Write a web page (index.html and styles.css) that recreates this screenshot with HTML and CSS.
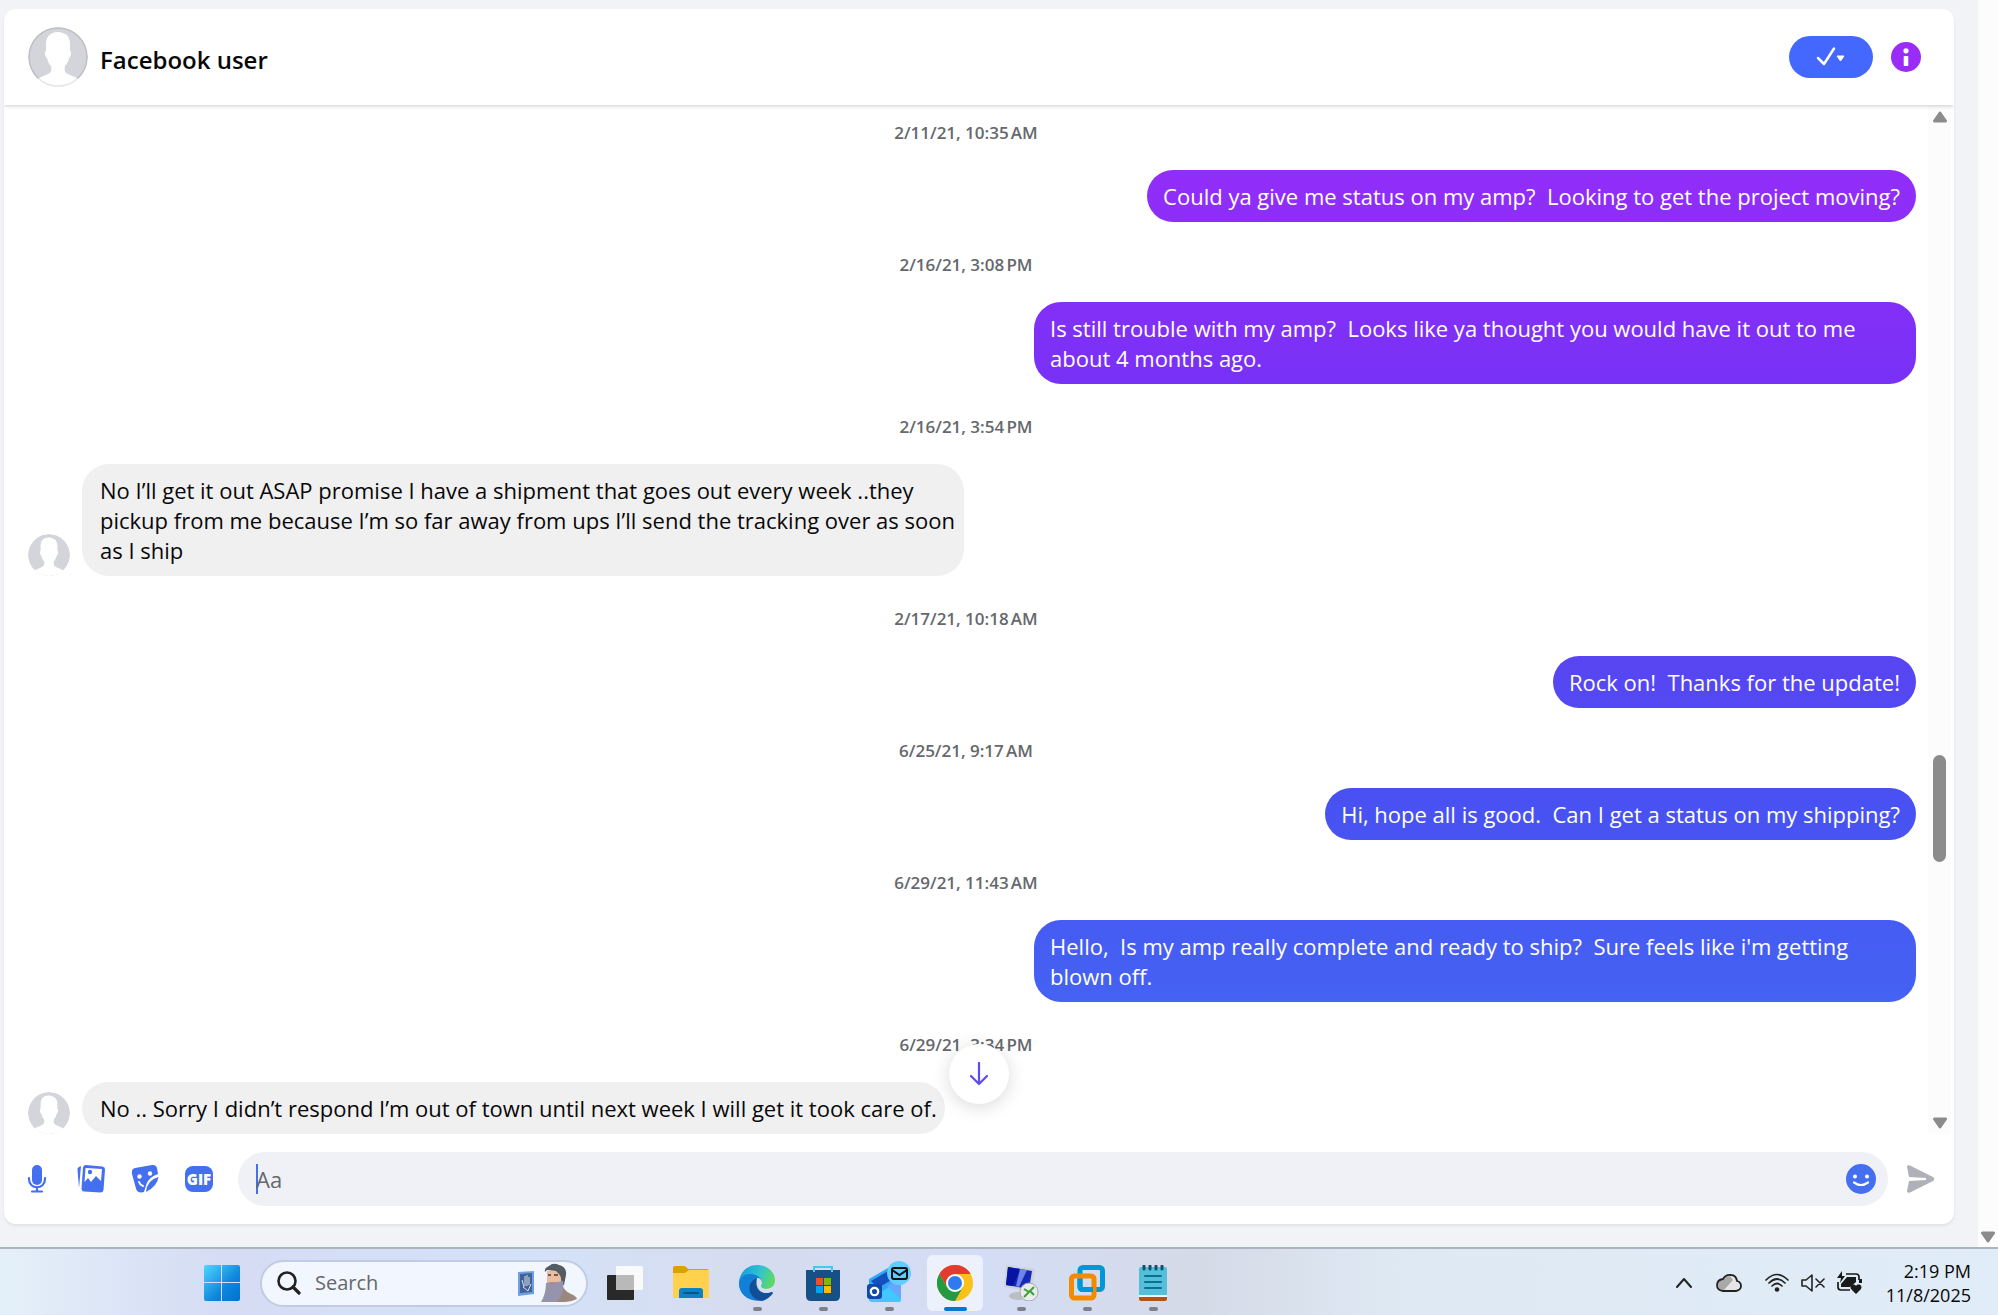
FILE: index.html
```html
<!DOCTYPE html>
<html lang="en">
<head>
    <meta charset="UTF-8">
    <meta name="viewport" content="width=device-width, initial-scale=1.0">
    <title>Facebook user</title>
    <link rel="stylesheet" href="styles.css">
</head>
<body>
    <!-- shared shapes -->
    <svg class="defs" aria-hidden="true">
        <symbol id="person" viewBox="0 0 60 60">
            <path d="M30 5c-8 0-12 5-12 12v7c-2 0-1 6 1 7 1 4 2 6 4 8 1 4 0 7-3 8L9 52c6 5 13 8 21 8s15-3 21-8l-11-5c-3-1-4-4-3-8 2-2 3-4 4-8 2-1 3-7 1-7v-7c0-5-2-9-5-10-2-1-4-2-7-2z" fill="#fff"/>
        </symbol>
    </svg>

    <div class="page">
        <main class="chat">
            <header class="chat-header">
                <svg class="avatar large" viewBox="0 0 60 60"><circle cx="30" cy="30" r="30" fill="#d4d5db"/><use href="#person"/><circle cx="30" cy="30" r="29" fill="none" stroke="#000" stroke-opacity=".1" stroke-width="1.5"/></svg>
                <h1>Facebook user</h1>
                <button class="done" aria-label="Mark as done">
                    <svg width="30" height="22" viewBox="0 0 30 22"><path d="M2 12l6 6L18 2.500" fill="none" stroke="#fff" stroke-width="2.500" stroke-linecap="round" stroke-linejoin="round"/><path d="M21 10h7l-3.500 5z" fill="#fff" stroke="#fff" stroke-linejoin="round"/></svg>
                </button>
                <button class="info" aria-label="Conversation information">
                    <svg width="30" height="30" viewBox="0 0 30 30"><circle cx="15" cy="15" r="15" fill="#9b2cf8"/><circle cx="15" cy="8.800" r="2.600" fill="#fff"/><rect x="12.700" y="14" width="4.600" height="10" rx=".8" fill="#fff"/></svg>
                </button>
            </header>

            <div class="chat-body">
                <div class="messages">
                    <div class="time">2/11/21, 10:35&#8239;AM</div>
                    <div class="row sent"><div class="bubble">Could ya give me status on my amp?  Looking to get the project moving?</div></div>

                    <div class="time">2/16/21, 3:08&#8239;PM</div>
                    <div class="row sent"><div class="bubble">Is still trouble with my amp?  Looks like ya thought you would have it out to me about 4 months ago.</div></div>

                    <div class="time">2/16/21, 3:54&#8239;PM</div>
                    <div class="row">
                        <svg class="avatar" viewBox="0 0 60 60"><circle cx="30" cy="30" r="30" fill="#d4d5db"/><use href="#person"/></svg>
                        <div class="bubble">No I’ll get it out ASAP promise I have a shipment that goes out every week ..they pickup from me because I’m so far away from ups I’ll send the tracking over as soon as I ship</div>
                    </div>

                    <div class="time">2/17/21, 10:18&#8239;AM</div>
                    <div class="row sent"><div class="bubble">Rock on!  Thanks for the update!</div></div>

                    <div class="time">6/25/21, 9:17&#8239;AM</div>
                    <div class="row sent"><div class="bubble">Hi, hope all is good.  Can I get a status on my shipping?</div></div>

                    <div class="time">6/29/21, 11:43&#8239;AM</div>
                    <div class="row sent"><div class="bubble">Hello,  Is my amp really complete and ready to ship?  Sure feels like i'm getting blown off.</div></div>

                    <div class="time">6/29/21, 3:34&#8239;PM</div>
                    <div class="row">
                        <svg class="avatar" viewBox="0 0 60 60"><circle cx="30" cy="30" r="30" fill="#d4d5db"/><use href="#person"/></svg>
                        <div class="bubble">No .. Sorry I didn’t respond I’m out of town until next week I will get it took care of.</div>
                    </div>
                </div>
                <div class="scrollbar">
                    <svg width="16" height="12" viewBox="0 0 16 12"><path d="M8 2l5.500 8h-11z" fill="#8b8b8b" stroke="#8b8b8b" stroke-width="3" stroke-linejoin="round"/></svg>
                    <div class="thumb"></div>
                    <svg width="16" height="12" viewBox="0 0 16 12"><path d="M8 10l5.500-8h-11z" fill="#8b8b8b" stroke="#8b8b8b" stroke-width="3" stroke-linejoin="round"/></svg>
                </div>
                <button class="jump" aria-label="Scroll to bottom">
                    <svg width="20" height="24" viewBox="0 0 20 24"><path d="M10 1v21M2 14l8 8 8-8" fill="none" stroke="#5a4cf0" stroke-width="2.200" stroke-linecap="round" stroke-linejoin="round"/></svg>
                </button>
            </div>

            <form class="composer">
                <div class="tools">
                    <button type="button" aria-label="Voice clip">
                        <svg width="30" height="30" viewBox="0 0 30 30"><rect x="10" y="1" width="10" height="20" rx="5" fill="#4470f0"/><path d="M7 14v1c0 11 16 11 16 0v-1M15 23v4M10 27.500h10" fill="none" stroke="#4470f0" stroke-width="2.200" stroke-linecap="round"/></svg>
                    </button>
                    <button type="button" aria-label="Attach a photo">
                        <svg width="30" height="30" viewBox="0 0 30 30"><path d="M5 2L3 3q-2 1-1.500 3L3 24z" fill="#4470f0"/><path d="M9.500 1l17 1.500q2.500.5 2.500 3L27.500 26q-.5 2.500-3 2.500L8 27.500q-2.500-.5-2.500-3L7 3.500Q7.500 1 9.500 1z" fill="#4470f0"/><path d="M9.500 4l16.500 1-1 12-5-5-5 6-3-4-3.500 4z" fill="#fff"/><circle cx="14" cy="8" r="2.200" fill="#4470f0"/></svg>
                    </button>
                    <button type="button" aria-label="Choose a sticker">
                        <svg width="30" height="30" viewBox="0 0 30 30"><path d="M5 4l17-3q4-.5 5 3l1 6q-9 3-11.500 10l-2.500 8-3 .5q-4 0-5-4L2 10q-1-5 3-6z" fill="#4470f0"/><path d="M28.500 13q-1 9-12.500 15 1-12 12.500-15z" fill="#4470f0"/><circle cx="9.500" cy="12.500" r="2.200" fill="#fff"/><circle cx="20" cy="9.500" r="2.200" fill="#fff"/><path d="M9 18q1 3 4 4" fill="none" stroke="#fff" stroke-width="2" stroke-linecap="round"/></svg>
                    </button>
                    <button type="button" aria-label="Choose a GIF">
                        <svg width="30" height="30" viewBox="0 0 30 30"><rect x="1" y="2" width="28" height="26" rx="8" fill="#4470f0"/><text x="15" y="21" class="gif" text-anchor="middle">GIF</text></svg>
                    </button>
                </div>
                <div class="field">
                    <input type="text" aria-label="Message" placeholder="Aa">
                    <button type="button" aria-label="Choose an emoji">
                        <svg width="30" height="30" viewBox="0 0 30 30"><circle cx="15" cy="15" r="15" fill="#4470f0"/><circle cx="9" cy="12.500" r="2" fill="#fff"/><circle cx="21" cy="12.500" r="2" fill="#fff"/><path d="M8 18.500q7 5 14 0" fill="none" stroke="#fff" stroke-width="2.200" stroke-linecap="round"/></svg>
                    </button>
                </div>
                <button type="submit" aria-label="Send">
                    <svg width="30" height="30" viewBox="0 0 30 30"><path d="M1 3q0-2.500 3-1.500L27 13q2.500 2 0 4L4 28.500Q1 29.500 1 27l2-10 17-1v-2L3 13z" fill="#b0b1b8"/></svg>
                </button>
            </form>
        </main>
        <div class="page-scroll">
            <svg width="16" height="12" viewBox="0 0 16 12"><path d="M8 10l5.500-8h-11z" fill="#8b8b8b" stroke="#8b8b8b" stroke-width="3" stroke-linejoin="round"/></svg>
        </div>
    </div>

    <footer class="taskbar">
        <button class="start" aria-label="Start">
            <svg width="36" height="36" viewBox="0 0 36 36"><defs><linearGradient id="win" x1="0" y1="0" x2="1" y2="1"><stop offset="0" stop-color="#4fd5ff"/><stop offset=".6" stop-color="#0f86dc"/><stop offset="1" stop-color="#0072d0"/></linearGradient></defs><path d="M2 0h15v17H0V2q0-2 2-2zM18 0h16q2 0 2 2v15H18zM0 18h17v18H2q-2 0-2-2zM18 18h18v16q0 2-2 2H18z" fill="url(#win)"/></svg>
        </button>
        <label class="search">
            <svg width="24" height="24" viewBox="0 0 24 24"><circle cx="10" cy="10" r="8.500" fill="none" stroke="#222" stroke-width="2.600"/><path d="M16 16l6 6" stroke="#222" stroke-width="3.200" stroke-linecap="round"/></svg>
            <input type="text" placeholder="Search" aria-label="Search">
            <svg width="60" height="40" viewBox="0 0 60 40">
                <path d="M1 9l16-1v23L1 33z" fill="#6c9fe6"/><path d="M3 11l12-1v19L3 30z" fill="#446191"/><path d="M7 24l-2-7M8 23V13M10 23V12M12 22V14M6 24l5 4 3-7" fill="none" stroke="#d4e0f3"/>
                <path d="M36 39l6-14 4-1q3 5 8 7 5 2 6 5-6 3-12 3z" fill="#9a877d"/>
                <path d="M30 8h13l4 6-1 11-6 5h-6l-4-10z" fill="#ebbd9f"/>
                <path d="M28 9q-1-4 4-6 4-4 10-1 8 2 7 10l-2 10-3-1q1-7-2-10l-3-3-9-1z" fill="#535b63"/>
                <path d="M29 20l5-1h6l6-1q1 8-1 13-2 5-6 8H24q5-8 5-19z" fill="#9694ad"/>
                <path d="M31 12h3M37 12h4" stroke="#4a3835" stroke-width="1.500"/><path d="M33 21h5" stroke="#c77a6a"/>
            </svg>
        </label>
        <div class="apps">
            <button class="app" aria-label="Task view">
                <svg width="36" height="36" viewBox="0 0 36 36"><rect x="0" y="10" width="27" height="25" rx="1" fill="#292929"/><rect x="9" y="1" width="27" height="24" rx="1" fill="#fafafa"/><path d="M9 10h18v15H9z" fill="#b9b9b9"/></svg>
            </button>
            <button class="app" aria-label="File Explorer">
                <svg width="36" height="36" viewBox="0 0 36 36"><path d="M0 3q0-2 2-2h9q2 0 4 3h19q2 0 2 2v10H0z" fill="#dda000"/><path d="M0 8h12l4-3h20v28H0z" fill="#ffd14c"/><path d="M6 33v-7q0-3 3-3h18q3 0 3 3v7z" fill="#0b82c8"/><path d="M11 28h14" stroke="#075384" stroke-width="2" stroke-linecap="round"/></svg>
            </button>
            <button class="app running" aria-label="Microsoft Edge">
                <svg width="36" height="36" viewBox="0 0 36 36"><defs><linearGradient id="edge" x1="0" y1=".2" x2="1" y2=".6"><stop offset="0" stop-color="#1699df"/><stop offset=".5" stop-color="#32c3ce"/><stop offset="1" stop-color="#66df4c"/></linearGradient></defs>
                    <path d="M0 18C0 8 8 0 18 0s18 7 18 15c0 6-4 9-9 9-4 0-6-1-5-4l-4 13C6 34 0 28 0 18z" fill="url(#edge)"/>
                    <path d="M0 18C1 12 6 9 11 9c7 0 12 4 12 9-3-5-9-2-9 5s5 10 9 12C11 38 0 30 0 18z" fill="#1280d6"/>
                    <path d="M18 13c-6 2-9 8-7 14 2 5 7 9 12 9 5-1 9-5 11-8 0-1-1-1-2-1-5 2-10 1-13-3-2-3-2-8 1-10z" fill="#124f99"/>
                    <path d="M18 13c3 0 5 2 5 5 0 1-1 2-1 3 0 2 2 3 5 3 3 0 5-1 7-2v4q-7 4-12 0-6-4-4-13z" fill="#d8def0"/>
                </svg>
            </button>
            <button class="app running" aria-label="Microsoft Store">
                <svg width="36" height="36" viewBox="0 0 36 36"><path d="M1 5h34v26q0 5-5 5H6q-5 0-5-5z" fill="#174f87"/><path d="M9 7V2h18v5" fill="none" stroke="#46c8f4" stroke-width="2"/><path d="M11 13h7v7h-7z" fill="#f25022"/><path d="M19 13h7v7h-7z" fill="#7fba00"/><path d="M11 21h7v7h-7z" fill="#00a4ef"/><path d="M19 21h7v7h-7z" fill="#ffb900"/></svg>
            </button>
            <button class="app running" aria-label="Outlook">
                <svg width="44" height="44" viewBox="0 0 44 44"><path d="M2 18l19-11 13 6v25q0 3-3 3H6q-4 0-4-4z" fill="#2fa9f4"/><path d="M4 20l17-10 10 5-20 12z" fill="#1550bf"/><path d="M2 38l32-19v19q0 3-3 3H6q-4 0-4-3z" fill="#40c8ff"/><path d="M20 25l14-9v22z" fill="#68a5fc"/><rect x="0" y="23" width="15" height="15" rx="3" fill="#1149a7"/><circle cx="7.500" cy="30.500" r="3.700" fill="none" stroke="#fff" stroke-width="2.300"/><circle cx="32" cy="12" r="12" fill="#60cdff"/><rect x="25" y="7" width="15" height="11" rx="2" fill="none" stroke="#111" stroke-width="2"/><path d="M25 9l7.500 5L40 9" fill="none" stroke="#111" stroke-width="2"/></svg>
            </button>
            <button class="app running active" aria-label="Google Chrome">
                <svg width="36" height="36" viewBox="0 0 36 36"><circle cx="18" cy="18" r="18" fill="#fbc116"/><path d="M2.400 9A18 18 0 0 1 33.600 9H18l-7.800 13.500z" fill="#e33b2e"/><path d="M2.400 9A18 18 0 0 0 18 36l7.800-13.500H10.200z" fill="#249a41"/><circle cx="18" cy="18" r="9" fill="#fff"/><circle cx="18" cy="18" r="7" fill="#3079ee"/></svg>
            </button>
            <button class="app running" aria-label="Remote Desktop">
                <svg width="36" height="36" viewBox="0 0 36 36"><ellipse cx="15" cy="31" rx="9" ry="4" fill="#bbbec3"/><path d="M3 0l29 4-3 23L1 22z" fill="#ced1d8"/><path d="M5 2l24 4-3 18L3 20z" fill="#1429b7"/><path d="M5 2l12 2-7 17-7-1z" fill="#0713a3"/><path d="M17 4l7 1-8 17-3-1z" fill="#6e84e8"/><circle cx="26" cy="27" r="9" fill="#e9ebed" stroke="#a7aaad"/><path d="M21 24l5 3-5 5M31 22l-4 4 4 4" fill="none" stroke="#38a332" stroke-width="2"/></svg>
            </button>
            <button class="app running" aria-label="VMware">
                <svg width="36" height="36" viewBox="0 0 36 36"><rect x="11" y="2.500" width="22.500" height="22" rx="3" fill="none" stroke="#0097d8" stroke-width="5"/><rect x="2.500" y="11" width="22.500" height="22" rx="3" fill="none" stroke="#f38b00" stroke-width="5"/><path d="M11 14v7.500q0 3 3 3h10" fill="none" stroke="#0097d8" stroke-width="5"/></svg>
            </button>
            <button class="app running" aria-label="Notepad">
                <svg width="36" height="36" viewBox="0 0 36 36"><path d="M4 31h28v3q0 2-2 2H6q-2 0-2-2z" fill="#b5530d"/><path d="M4 29h28v3H4z" fill="#f4f4f4"/><path d="M6 2h24q2 0 2 2v26H4V4q0-2 2-2z" fill="#55bfda"/><path d="M9 1v3M15 1v3M21 1v3M27 1v3" stroke="#11526b" stroke-width="3" stroke-linecap="round"/><path d="M10 11h16M10 17h16M10 23h16" stroke="#087092" stroke-width="2" stroke-linecap="round"/></svg>
            </button>
        </div>
        <div class="tray">
            <button aria-label="Show hidden icons"><svg width="18" height="12" viewBox="0 0 18 12"><path d="M2 10l7-8 7 8" fill="none" stroke="#222" stroke-width="2" stroke-linecap="round" stroke-linejoin="round"/></svg></button>
            <button aria-label="OneDrive"><svg width="26" height="20" viewBox="0 0 26 20"><path d="M7 18q-6-1-6-6t6-6q3-5 8-4 5 0 6 6 4 1 4 5t-5 5z" fill="#e6e6e6"/><path d="M7 17q-5-1-5-5t5-5q2-4 7-4l3 4-9 10z" fill="#a9a9a9"/><path d="M7 18q-6-1-6-6t6-6q3-5 8-4 5 0 6 6 4 1 4 5t-5 5z" fill="none" stroke="#222" stroke-width="1.800"/></svg></button>
            <button class="network" aria-label="Network, sound and battery">
                <svg width="24" height="20" viewBox="0 0 24 20"><path d="M1 7q11-11 22 0M4 10q8-8 16 0M7 13q5-5 10 0" fill="none" stroke="#222" stroke-width="1.700" stroke-linecap="round"/><circle cx="12" cy="16.500" r="2.300" fill="#222"/></svg>
                <svg width="24" height="20" viewBox="0 0 24 20"><path d="M1 7h4l6-5v16l-6-5H1zM15 6l8 8M23 6l-8 8" fill="none" stroke="#222" stroke-width="1.600" stroke-linecap="round" stroke-linejoin="round"/></svg>
                <svg width="26" height="24" viewBox="0 0 26 24"><path d="M9 3h10q3 0 3 3v3M1 11v5q0 3 3 3h9" fill="none" stroke="#1a1a1a" stroke-width="1.700"/><path d="M10 6h9v5l-6 5H4v-3zM22 8h3v4h-3z" fill="#1a1a1a"/><path d="M5 0L0 7h4l-1 5 5-7H5z" fill="#1a1a1a"/><path d="M19 23l-5-5c-2-4 3-6 5-3 2-3 7-1 5 3z" fill="#1a1a1a"/></svg>
            </button>
            <div class="clock"><span>2:19 PM</span><span>11/8/2025</span></div>
        </div>
    </footer>
</body>
</html>
```
FILE: styles.css
```css
* {
    box-sizing: border-box;
}

body {
    margin: 0;
    height: 100vh;
    display: flex;
    flex-direction: column;
    background: #f2f3f7;
    font-family: "Open Sans", "Noto Sans", sans-serif;
    font-size: 22px;
    line-height: 30px;
    color: #080809;
}

button {
    display: flex;
    align-items: center;
    justify-content: center;
    padding: 0;
    border: 0;
    background: none;
}

svg {
    display: block;
    flex: none;
}

.defs {
    position: absolute;
    width: 0;
    height: 0;
}

.page {
    flex: 1;
    min-height: 0;
    display: flex;
}

.chat {
    flex: 1;
    min-width: 0;
    display: flex;
    flex-direction: column;
    margin: 9px 24px 23px 4px;
    background: #fff;
    border-radius: 12px;
    box-shadow: 0 2px 3px rgba(0, 0, 0, 0.07);
}

.page-scroll {
    width: 20px;
    padding: 0 2px 4px;
    display: flex;
    align-items: flex-end;
    background: #fcfcfc;
}

/* header */
.chat-header {
    height: 96px;
    padding: 0 33px 0 24px;
    display: flex;
    align-items: center;
    box-shadow: 0 1px 4px rgba(0, 0, 0, 0.2);
    clip-path: inset(0 0 -8px 0);
    z-index: 1;
}

.avatar {
    width: 42px;
    height: 42px;
    margin-right: 12px;
    border-radius: 50%;
}

.avatar.large {
    width: 60px;
    height: 60px;
}

h1 {
    flex: 1;
    margin: 6px 0 0;
    font-size: 24px;
    font-weight: 600;
}

.done {
    width: 84px;
    height: 42px;
    margin-right: 18px;
    border-radius: 21px;
    background: #4468fd;
}

/* conversation */
.chat-body {
    position: relative;
    flex: 1;
    min-height: 0;
    display: flex;
    padding-right: 3px;
}

.messages {
    flex: 1;
    display: flex;
    flex-direction: column;
    justify-content: flex-end;
    overflow: hidden;
}

.time {
    flex: none;
    padding: 33px 0 27px;
    font-size: 17px;
    line-height: 20px;
    font-weight: 600;
    text-align: center;
    color: #65686c;
}

.row {
    flex: none;
    display: flex;
    align-items: flex-end;
    padding: 0 12px 0 24px;
}

.sent {
    justify-content: flex-end;
}

.bubble {
    max-width: 882px;
    padding: 11px 8px 11px 18px;
    border-radius: 27px;
    background: #f0f0f0;
    white-space: pre-wrap;
}

/* one gradient runs behind all the sent bubbles */
.sent .bubble {
    padding: 11px 16px;
    color: #fff;
    background: linear-gradient(#9b2cfa 105px, #7831f6 385px, #5547f2 683px, #4852f2 815px, #4464f3 1020px) fixed;
}

.scrollbar {
    width: 23px;
    display: flex;
    flex-direction: column;
    align-items: center;
    justify-content: space-between;
    padding: 6px 0 5px;
    background: #fcfcfc;
}

.thumb {
    width: 13px;
    height: 107px;
    margin-top: 376px;
    border-radius: 7px;
    background: #8b8b8b;
}

.jump {
    position: absolute;
    left: 50%;
    bottom: 30px;
    width: 60px;
    height: 60px;
    margin-left: -30px;
    border-radius: 50%;
    background: #fff;
    box-shadow: 0 3px 18px rgba(0, 0, 0, 0.15);
}

/* message box */
.composer {
    height: 90px;
    padding: 0 18px;
    display: flex;
    align-items: center;
    gap: 18px;
}

.tools {
    display: flex;
    gap: 24px;
    margin-right: 6px;
}

.gif {
    font-family: "Open Sans", sans-serif;
    font-size: 15px;
    font-weight: 800;
    fill: #fff;
}

.field {
    flex: 1;
    height: 54px;
    padding: 0 12px 0 18px;
    display: flex;
    align-items: center;
    border-radius: 27px;
    background: #f0f1f6;
}

/* text cursor */
.field::before {
    content: "";
    width: 2px;
    height: 30px;
    margin-right: -2px;
    background: #4470f0;
}

input {
    flex: 1;
    min-width: 0;
    padding: 0;
    border: 0;
    outline: 0;
    background: none;
    font: inherit;
    caret-color: #4470f0;
}

input::placeholder {
    color: #65686c;
    opacity: 1;
}

/* taskbar */
.taskbar {
    flex: none;
    height: 68px;
    padding: 2px 27px 0 204px;
    display: flex;
    align-items: center;
    border-top: 2px solid #adb3c0;
    background: linear-gradient(90deg, #e4f0f9, #d5dcf4 11%, #d4e2f8 26%, #d6dcef 38%, #d3ddf5 49%, #d5dae7 60%, #dee9f4 70%, #e0ecf7);
}

.search {
    width: 328px;
    height: 47px;
    margin-left: 20px;
    padding: 0 9px 0 15px;
    display: flex;
    align-items: center;
    gap: 14px;
    border: 2px solid #c1cce4;
    border-radius: 24px;
    background: #f2f6fe;
}

.search input {
    font-size: 20px;
}

.apps {
    display: flex;
    gap: 10px;
    margin-left: 9px;
}

.app {
    position: relative;
    width: 56px;
    height: 56px;
    border-radius: 6px;
}

.active {
    background: #edf1fb;
}

.running::after {
    content: "";
    position: absolute;
    bottom: 0;
    width: 9px;
    height: 4px;
    border-radius: 2px;
    background: #7c8089;
}

.active::after {
    width: 23px;
    background: #0078d4;
}

.tray {
    flex: 1;
    display: flex;
    align-items: center;
    justify-content: flex-end;
    gap: 23px;
}

.network {
    gap: 12px;
}

.clock {
    display: flex;
    flex-direction: column;
    text-align: right;
    font-size: 18px;
    line-height: 24px;
}
```
